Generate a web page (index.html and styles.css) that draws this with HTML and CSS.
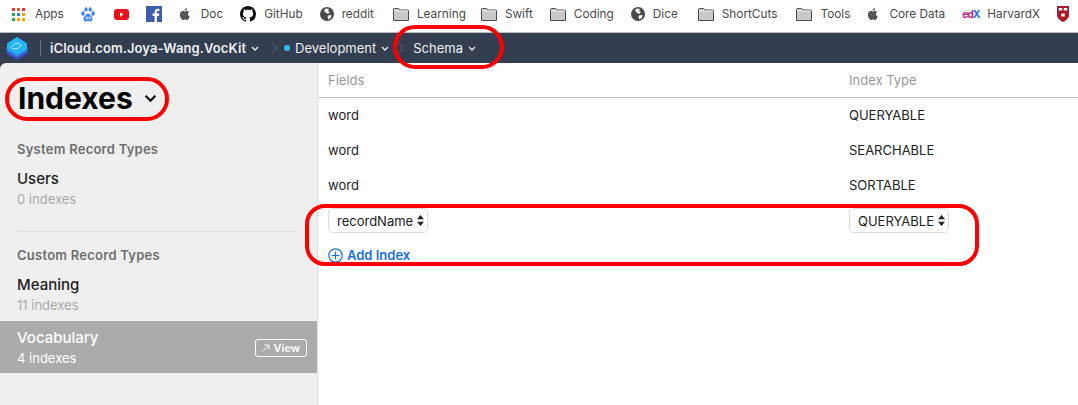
FILE: index.html

```html
<!DOCTYPE html>
<html>
  <head>
    <meta charset="utf-8">
    <title>CloudKit Dashboard</title>
    <link rel="stylesheet" href="styles.css">
  </head>
  <body>
    <!-- Browser bookmarks -->
    <div class="bookmarks">
      <a class="mark mark-apps">
        <svg viewBox="0 0 13 13" width="13" height="13">
          <rect x="0" y="0" width="3" height="3" fill="#e8382b"/><rect x="5" y="0" width="3" height="3" fill="#e8582b"/><rect x="10" y="0" width="3" height="3" fill="#e8382b"/>
          <rect x="0" y="5" width="3" height="3" fill="#2aa84a"/><rect x="5" y="5" width="3" height="3" fill="#3b7de8"/><rect x="10" y="5" width="3" height="3" fill="#f2a600"/>
          <rect x="0" y="10" width="3" height="3" fill="#2aa84a"/><rect x="5" y="10" width="3" height="3" fill="#f2a600"/><rect x="10" y="10" width="3" height="3" fill="#f2a600"/>
        </svg>
        Apps
      </a>
      <a class="mark mark-baidu">
        <svg viewBox="0 0 14 15" width="14" height="15">
          <g fill="#3f82ea"><ellipse cx="2" cy="6.500" rx="1.700" ry="2.200"/><ellipse cx="5" cy="2.400" rx="1.600" ry="2.200"/><ellipse cx="9.200" cy="2.400" rx="1.600" ry="2.200"/><ellipse cx="12" cy="6.500" rx="1.700" ry="2.200"/><path d="M7 6.500c-2 0-2.400 2-3.800 3.200C1.800 11 2.500 14.500 5 14.500c1 0 1.300-.4 2-.4s1 .4 2 .4c2.500 0 3.200-3.500 1.800-4.800C9.400 8.500 9 6.500 7 6.500z"/></g>
          <path d="M5 9.500v2.500h1.600V9.500M8 9.500v2.500h1.400V9.500" fill="none" stroke="#fff" stroke-width=".7"/>
        </svg>
      </a>
      <a class="mark mark-yt">
        <svg viewBox="0 0 15 11" width="15" height="11"><rect width="15" height="11" rx="3" fill="#e8101a"/><path d="M6 3.300l3.600 2.200L6 7.700z" fill="#fff"/></svg>
      </a>
      <a class="mark mark-fb">
        <svg viewBox="0 0 16 16" width="16" height="16"><rect width="16" height="16" fill="#3b5db0"/><path d="M11 16v-6h2l.3-2.400H11V6.200c0-.7.2-1.200 1.200-1.200h1.200V2.900c-.3 0-1-.1-1.800-.1-1.800 0-3 1.100-3 3.100v1.700h-2V10h2v6z" fill="#fff"/></svg>
      </a>
      <a class="mark mark-doc">
        <svg class="apple" viewBox="0 0 14 16" width="12" height="14"><path d="M10.400 8.400c0-1.700 1.400-2.500 1.500-2.600-.8-1.200-2.100-1.300-2.500-1.400-1.100-.1-2.100.6-2.600.6s-1.400-.6-2.300-.6C3.300 4.400 2.200 5.100 1.600 6.200.4 8.300 1.300 11.500 2.500 13.200c.6.800 1.300 1.800 2.200 1.700.9 0 1.200-.6 2.300-.6s1.400.6 2.300.6 1.600-.8 2.200-1.700c.7-1 1-1.900 1-2-.1 0-2.100-.8-2.100-2.800zM8.700 3.300c.5-.6.800-1.400.7-2.300-.7 0-1.600.5-2.100 1.100-.5.500-.9 1.400-.8 2.200.8.100 1.700-.4 2.200-1z"/></svg>
        Doc
      </a>
      <a class="mark mark-github">
        <svg viewBox="0 0 16 16" width="16" height="16"><path fill="#111" d="M8 0C3.580 0 0 3.580 0 8c0 3.540 2.290 6.530 5.470 7.590.4.070.55-.17.55-.38 0-.19-.01-.82-.01-1.490-2.010.37-2.530-.49-2.690-.94-.09-.23-.48-.94-.82-1.130-.28-.15-.68-.52-.01-.53.63-.01 1.080.58 1.230.82.720 1.210 1.870.87 2.330.66.070-.52.280-.87.510-1.070-1.780-.2-3.640-.89-3.640-3.950 0-.87.310-1.590.820-2.150-.08-.2-.36-1.020.08-2.120 0 0 .67-.21 2.200.82.640-.18 1.320-.27 2-.27s1.360.09 2 .27c1.530-1.040 2.200-.82 2.200-.82.440 1.100.160 1.920.080 2.120.510.560.820 1.270.820 2.150 0 3.070-1.870 3.750-3.650 3.950.290.250.540.730.540 1.480 0 1.070-.010 1.930-.010 2.200 0 .21.150.46.550.38A8.010 8.010 0 0 0 16 8c0-4.420-3.580-8-8-8z"/></svg>
        GitHub
      </a>
      <a class="mark mark-reddit">
        <svg viewBox="0 0 14 14" width="14" height="14"><circle cx="7" cy="7" r="7" fill="#4a4a4a"/><path d="M6 1.500l3 .5-1 2 2 1-2 2-3-2-1-2zM8 8.500l3.500-.5-.5 2.500-2.500 2-1-2.500z" fill="#fff"/></svg>
        reddit
      </a>
      <a class="mark mark-learning">
        <svg viewBox="0 0 16 13" width="16" height="13"><path d="M.5 12.500V1.500a1 1 0 0 1 1-1h4l1.500 1.500h7.500a1 1 0 0 1 1 1v9.500z" fill="#c9c9c9" stroke="#4a4a4a"/><path d="M1 2.500h14v1H1z" fill="#eee"/></svg>
        Learning
      </a>
      <a class="mark mark-swift">
        <svg viewBox="0 0 16 13" width="16" height="13"><path d="M.5 12.500V1.500a1 1 0 0 1 1-1h4l1.500 1.500h7.500a1 1 0 0 1 1 1v9.500z" fill="#c9c9c9" stroke="#4a4a4a"/><path d="M1 2.500h14v1H1z" fill="#eee"/></svg>
        Swift
      </a>
      <a class="mark mark-coding">
        <svg viewBox="0 0 16 13" width="16" height="13"><path d="M.5 12.500V1.500a1 1 0 0 1 1-1h4l1.500 1.500h7.500a1 1 0 0 1 1 1v9.500z" fill="#c9c9c9" stroke="#4a4a4a"/><path d="M1 2.500h14v1H1z" fill="#eee"/></svg>
        Coding
      </a>
      <a class="mark mark-dice">
        <svg viewBox="0 0 14 14" width="14" height="14"><circle cx="7" cy="7" r="7" fill="#4a4a4a"/><path d="M6 1.500l3 .5-1 2 2 1-2 2-3-2-1-2zM8 8.500l3.500-.5-.5 2.500-2.500 2-1-2.500z" fill="#fff"/></svg>
        Dice
      </a>
      <a class="mark mark-shortcuts">
        <svg viewBox="0 0 16 13" width="16" height="13"><path d="M.5 12.500V1.500a1 1 0 0 1 1-1h4l1.500 1.500h7.500a1 1 0 0 1 1 1v9.500z" fill="#c9c9c9" stroke="#4a4a4a"/><path d="M1 2.500h14v1H1z" fill="#eee"/></svg>
        ShortCuts
      </a>
      <a class="mark mark-tools">
        <svg viewBox="0 0 16 13" width="16" height="13"><path d="M.5 12.500V1.500a1 1 0 0 1 1-1h4l1.500 1.500h7.500a1 1 0 0 1 1 1v9.500z" fill="#c9c9c9" stroke="#4a4a4a"/><path d="M1 2.500h14v1H1z" fill="#eee"/></svg>
        Tools
      </a>
      <a class="mark mark-coredata">
        <svg class="apple" viewBox="0 0 14 16" width="12" height="14"><path d="M10.400 8.400c0-1.700 1.400-2.500 1.500-2.600-.8-1.200-2.100-1.300-2.500-1.400-1.100-.1-2.100.6-2.600.6s-1.400-.6-2.300-.6C3.300 4.400 2.200 5.100 1.600 6.200.4 8.300 1.300 11.500 2.500 13.200c.6.800 1.300 1.800 2.200 1.700.9 0 1.200-.6 2.300-.6s1.400.6 2.300.6 1.600-.8 2.200-1.700c.7-1 1-1.900 1-2-.1 0-2.100-.8-2.100-2.800zM8.700 3.300c.5-.6.800-1.400.7-2.300-.7 0-1.600.5-2.100 1.100-.5.500-.9 1.400-.8 2.200.8.100 1.700-.4 2.200-1z"/></svg>
        Core Data
      </a>
      <a class="mark mark-edx"><span class="edx"><span class="edx-ed">ed</span><span class="edx-x">X</span></span>HarvardX</a>
      <a class="mark mark-harvard">
        <svg viewBox="0 0 12 16" width="12" height="16"><path d="M0 0h12v9c0 3.500-3 5.500-6 7-3-1.500-6-3.500-6-7z" fill="#a51c30"/><path d="M1.800 2h3.400v2.500H1.800zM6.800 2h3.400v2.500H6.800zM4.300 7.500h3.400v3H4.300z" fill="#fff"/></svg>
      </a>
    </div>

    <!-- Dashboard nav -->
    <div class="topnav">
      <svg class="logo" viewBox="0 0 22 24" width="22" height="24">
        <path d="M11 9l10 6v2.500L11 23.500 1 17.500V15z" fill="#3a4fc4" stroke="#3a4fc4" stroke-linejoin="round"/>
        <path d="M11 6l10 6v2.500L11 20.500 1 14.500V12z" fill="#2f86e4" stroke="#2f86e4" stroke-linejoin="round"/>
        <path d="M11 1.500l9.500 6v5L11 18 1.500 12.500v-5z" fill="#22b5f5" stroke="#22b5f5" stroke-linejoin="round"/>
        <path d="M6.500 12.500c-1.500-1-.8-3 .8-3 .5-2 3.500-3.200 5.200-1.800 1.300-.4 2.800.9 2.200 2.300-1.300 1.800-3 2.500-5 2.800z" fill="none" stroke="#c6f0ff" stroke-width=".9"/>
      </svg>
      <span class="nav-sep"></span>
      <span class="nav-item nav-container">iCloud.com.Joya-Wang.VocKit
        <svg class="chev" viewBox="0 0 8 5" width="8" height="5"><path d="M1 1l3 3 3-3" fill="none" stroke="currentColor" stroke-width="1.300"/></svg>
      </span>
      <svg class="crumb crumb-env" viewBox="0 0 7 14" width="7" height="14"><path d="M1 1l5 6-5 6" fill="none" stroke="#55606f"/></svg>
      <span class="nav-item nav-env"><i class="dot"></i>Development
        <svg class="chev" viewBox="0 0 8 5" width="8" height="5"><path d="M1 1l3 3 3-3" fill="none" stroke="currentColor" stroke-width="1.300"/></svg>
      </span>
      <svg class="crumb crumb-schema" viewBox="0 0 7 14" width="7" height="14"><path d="M1 1l5 6-5 6" fill="none" stroke="#55606f"/></svg>
      <span class="nav-item nav-schema">Schema
        <svg class="chev" viewBox="0 0 8 5" width="8" height="5"><path d="M1 1l3 3 3-3" fill="none" stroke="currentColor" stroke-width="1.300"/></svg>
      </span>
    </div>

    <div class="content">
      <!-- Left column of record types -->
      <div class="sidebar">
        <div class="title">Indexes
          <svg viewBox="0 0 12 8" width="13" height="9"><path d="M1.500 1.500L6 6l4.500-4.500" fill="none" stroke="#000" stroke-width="2"/></svg>
        </div>
        <div class="group-name">System Record Types</div>
        <div class="rec">
          <div class="rec-name">Users</div>
          <div class="rec-sub">0 indexes</div>
        </div>
        <div class="divider"></div>
        <div class="group-name">Custom Record Types</div>
        <div class="rec">
          <div class="rec-name">Meaning</div>
          <div class="rec-sub">11 indexes</div>
        </div>
        <div class="rec rec-selected">
          <div>
            <div class="rec-name">Vocabulary</div>
            <div class="rec-sub">4 indexes</div>
          </div>
          <span class="view-btn">
            <svg viewBox="0 0 8 8" width="8" height="8"><path d="M1 7l6-6M2.500 1H7v4.500" fill="none" stroke="#fff" stroke-width="1"/></svg>
            View
          </span>
        </div>
      </div>

      <!-- Index table -->
      <div class="main">
        <div class="row row-head">
          <span class="col-field">Fields</span>
          <span class="col-type">Index Type</span>
        </div>
        <div class="row">
          <span class="col-field">word</span>
          <span class="col-type">QUERYABLE</span>
        </div>
        <div class="row">
          <span class="col-field">word</span>
          <span class="col-type">SEARCHABLE</span>
        </div>
        <div class="row">
          <span class="col-field">word</span>
          <span class="col-type">SORTABLE</span>
        </div>
        <div class="row row-edit">
          <span class="col-field">
            <span class="select select-name">recordName
              <svg viewBox="0 0 7 11" width="7" height="11"><path d="M3.500 0L7 4.300H0zM3.500 11L0 6.700h7z" fill="#222"/></svg>
            </span>
          </span>
          <span class="col-type">
            <span class="select select-type">QUERYABLE
              <svg viewBox="0 0 7 11" width="7" height="11"><path d="M3.500 0L7 4.300H0zM3.500 11L0 6.700h7z" fill="#222"/></svg>
            </span>
          </span>
        </div>
        <div class="add-index">
          <svg viewBox="0 0 15 15" width="15" height="15"><circle cx="7.500" cy="7.500" r="6.700" fill="none" stroke="#1a6fe0" stroke-width="1.200"/><path d="M7.500 3.500v8M3.500 7.500h8" stroke="#1a6fe0" stroke-width="1.200"/></svg>
          Add Index
        </div>
      </div>
    </div>

    <!-- Red annotation rings drawn on top of the screenshot -->
    <div class="ring ring-schema"></div>
    <div class="ring ring-title"></div>
    <div class="ring ring-add"></div>
  </body>
</html>
```

FILE: styles.css

```css
html, body {
  margin: 0;
  padding: 0;
  width: 1078px;
  height: 405px;
  overflow: hidden;
  background: #fff;
  font-family: "Inter", "Liberation Sans", sans-serif;
  color: #222;
}

/* Bookmarks */
.bookmarks {
  display: flex;
  align-items: center;
  height: 28px;
  padding: 0 0 4px 12px;
  border-bottom: 1px solid #b9b9b9;
  font-size: 11.8px;
  color: #4a4a4a;
  white-space: nowrap;
}

.mark {
  display: flex;
  align-items: center;
  flex-shrink: 0;
  gap: 8px;
  margin-right: 17px;
}

.mark-apps { gap: 10px; }
.mark-baidu { margin-right: 19px; }
.mark-doc, .mark-coredata { gap: 10px; }
.mark-reddit { margin-right: 19px; }
.mark-learning { margin-right: 15px; }
.mark-dice { margin-right: 20px; }
.mark-shortcuts { margin-right: 19px; }

.apple { fill: #555; }

.edx {
  font-size: 10.5px;
  font-weight: 700;
  letter-spacing: -1.2px;
}
.edx-ed { color: #c7257e; }
.edx-x { color: #1a6fe0; }

/* Top nav */
.topnav {
  display: flex;
  align-items: center;
  height: 30px;
  background: #333e50;
  color: #eef0f3;
  font-size: 13px;
  padding-left: 6px;
  white-space: nowrap;
}

.logo { margin-right: 12px; }

.nav-sep {
  width: 1px;
  height: 16px;
  background: #6a7483;
  margin-right: 9px;
}

.nav-item {
  display: flex;
  align-items: center;
  gap: 5px;
}

.nav-container {
  font-weight: 600;
  letter-spacing: .1px;
}
.crumb-env { margin: 0 6px 0 12px; }
.crumb-schema { margin: 0 9px 0 8px; }
.dot {
  width: 6px;
  height: 6px;
  border-radius: 50%;
  background: #35bdf2;
}

/* Page under the nav */
.content {
  display: flex;
  height: 342px;
  background: #333e50;
}

.sidebar {
  width: 317px;
  background: #efefef;
  border-right: 1px solid #e2e2e2;
  border-top-left-radius: 6px;
}

.title {
  display: flex;
  align-items: center;
  gap: 11px;
  font-size: 30px;
  font-weight: 700;
  color: #000;
  padding-left: 18px;
  height: 70px;
  margin-bottom: 8px;
}

.group-name {
  font-size: 13px;
  font-weight: 600;
  letter-spacing: .25px;
  color: #6e6e6e;
  padding-left: 17px;
  line-height: 16px;
}

.rec {
  padding: 12px 10px 6px 17px;
}

.rec-name {
  font-size: 15px;
  font-weight: 500;
  line-height: 20px;
  color: #222;
}

.rec-sub {
  font-size: 13px;
  line-height: 20px;
  color: #aaa;
}

.divider {
  height: 1px;
  background: #e0e0e0;
  margin: 16px 0 15px 17px;
  width: 280px;
}

.rec-selected {
  display: flex;
  align-items: center;
  justify-content: space-between;
  height: 52px;
  padding: 1px 10px 0 17px;
  box-sizing: border-box;
  background: #ababab;
}

.rec-selected .rec-name,
.rec-selected .rec-sub { color: #fff; }

.view-btn {
  display: flex;
  align-items: center;
  gap: 4px;
  border: 1px solid #fff;
  border-radius: 3px;
  color: #fff;
  font-size: 11px;
  font-weight: 600;
  height: 16px;
  padding: 0 6px;
  margin-top: 1px;
}

/* Index table */
.main {
  flex: 1;
  background: #fff;
  font-size: 13px;
}

.row {
  display: flex;
  align-items: center;
  height: 35px;
  padding-bottom: 1px;
  box-sizing: border-box;
  color: #222;
}

.row-head {
  border-bottom: 1px solid #c4c4c4;
  color: #999;
}

.col-field {
  width: 531px;
  padding-left: 10px;
  box-sizing: border-box;
}

.row-edit { padding-bottom: 0; }

.select {
  display: inline-flex;
  align-items: center;
  gap: 4px;
  height: 25px;
  border: 1px solid #dcdcdc;
  border-radius: 5px;
  padding: 0 3px 0 8px;
  box-sizing: border-box;
}

.add-index {
  display: flex;
  align-items: center;
  gap: 4px;
  color: #1a6fe0;
  font-weight: 600;
  padding: 9px 0 0 10px;
}

/* Red annotation rings */
.ring {
  position: absolute;
  border: 4px solid #f00;
  box-sizing: border-box;
}
.ring-schema {
  left: 393px; top: 25px;
  width: 111px; height: 44px;
  border-radius: 22px;
}
.ring-title {
  left: 5px; top: 77px;
  width: 164px; height: 44px;
  border-radius: 22px;
}
.ring-add {
  left: 305px; top: 204px;
  width: 674px; height: 62px;
  border-radius: 20px;
}
```
